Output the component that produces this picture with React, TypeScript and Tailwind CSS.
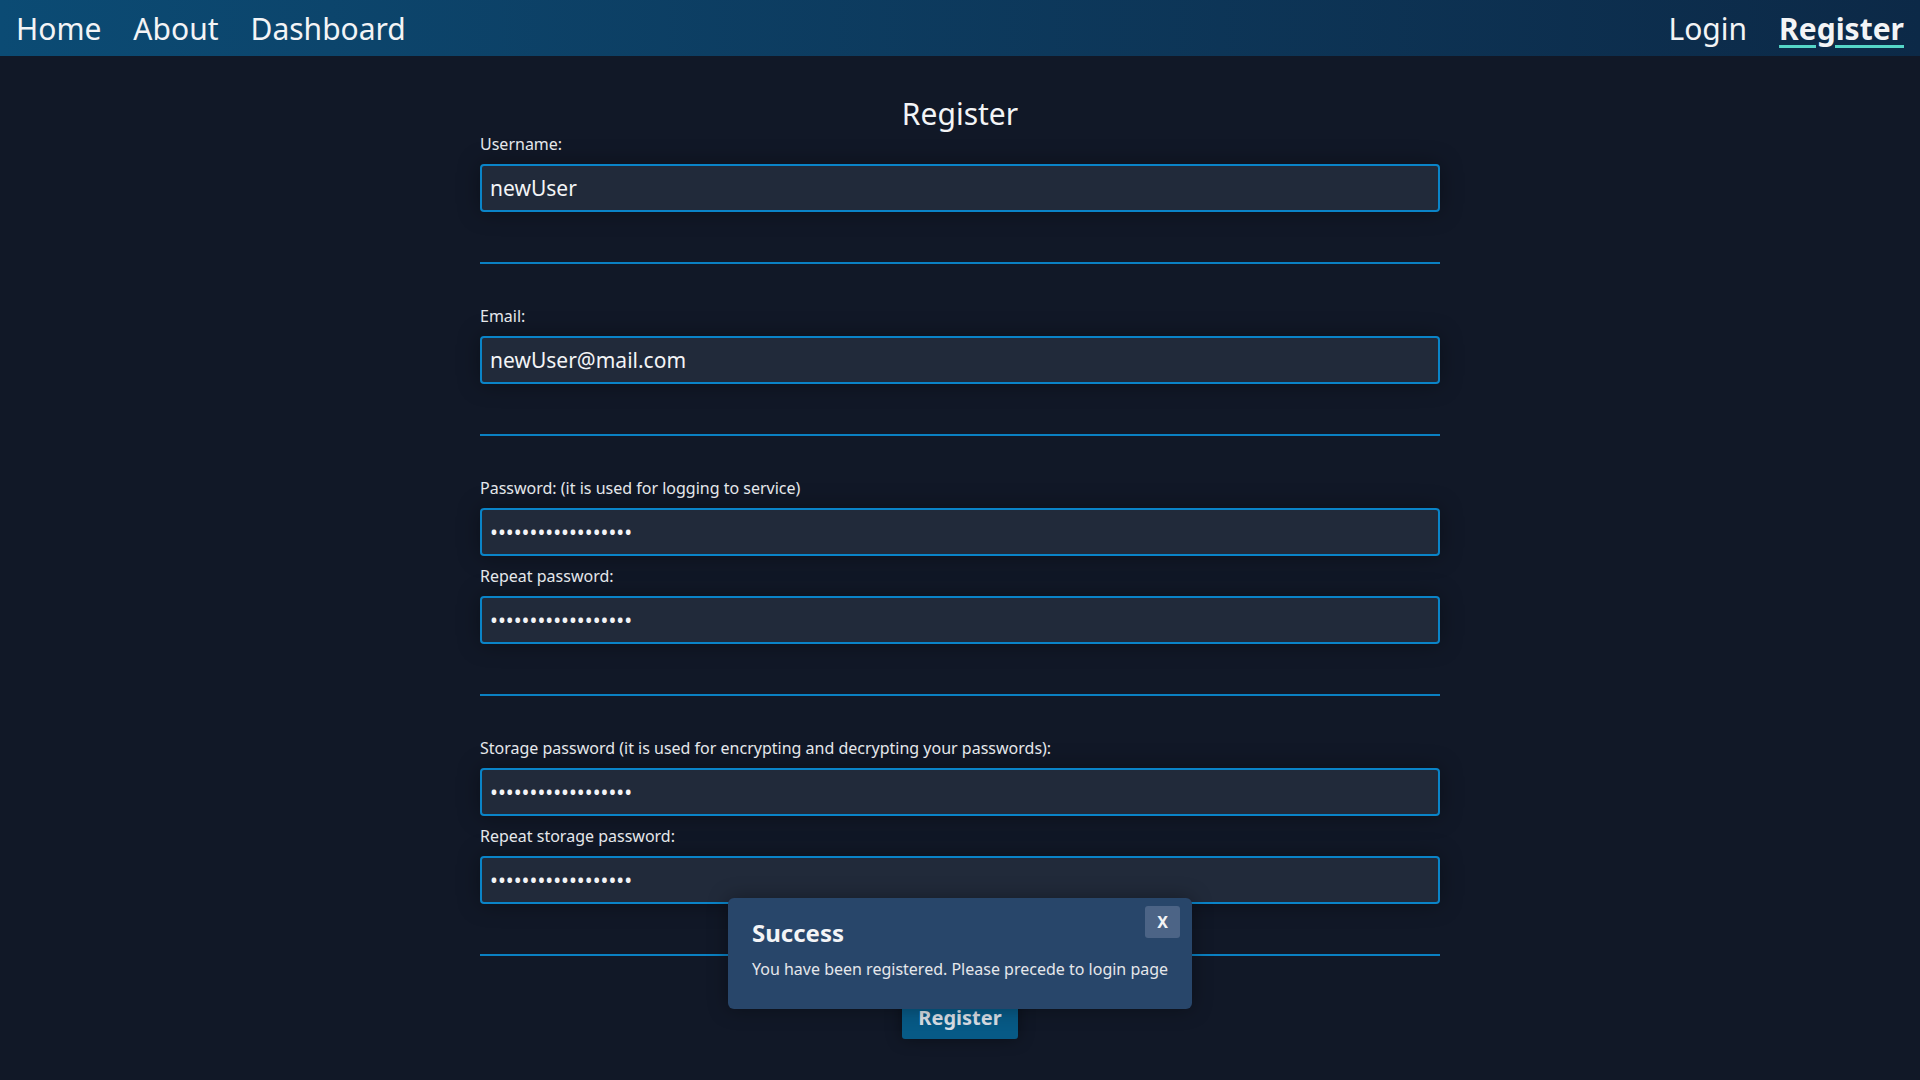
import { useState } from "react"

interface Field {
	id: string
	label: string
	type: string
	value: string
}

const groups: Field[][] = [
	[{ id: "username", label: "Username:", type: "text", value: "newUser" }],
	[{ id: "email", label: "Email:", type: "email", value: "newUser@mail.com" }],
	[
		{ id: "password", label: "Password: (it is used for logging to service)", type: "password", value: "secretPassword1234" },
		{ id: "password2", label: "Repeat password:", type: "password", value: "secretPassword1234" },
	],
	[
		{ id: "storage", label: "Storage password (it is used for encrypting and decrypting your passwords):", type: "password", value: "storagePassword123" },
		{ id: "storage2", label: "Repeat storage password:", type: "password", value: "storagePassword123" },
	],
]

function Navbar() {
	return (
		<nav className="h-[56px] flex items-center justify-between bg-linear-to-r from-[#0b4b74] to-[#0c2947] px-4 text-[30px] text-[#f3f4f6]">
			<div className="flex items-center gap-[32px]">
				<a href="#">Home</a>
				<a href="#">About</a>
				<a href="#">Dashboard</a>
			</div>
			<div className="flex items-center gap-[32px]">
				<a href="#">Login</a>
				<a
					href="#"
					className="font-bold underline decoration-[#55d6c8] decoration-[3px] underline-offset-[5px]"
				>
					Register
				</a>
			</div>
		</nav>
	)
}

export default function App() {
	const [showPopup, setShowPopup] = useState(true)

	return (
		<div className="relative min-h-screen bg-[#111827] font-['Noto_Sans',sans-serif] text-[#e5e7eb]">
			<Navbar />

			<main className="w-[960px] mx-auto">
				<h1 className="mt-[43px] mb-[3px] text-center text-[30px] leading-[30px] text-[#f3f4f6]">
					Register
				</h1>

				<form onSubmit={e => e.preventDefault()}>
					{groups.map((group, gi) => (
						<div key={gi}>
							<div className={gi === 0 ? "pb-[42px]" : "pt-[40px] pb-[42px]"}>
								{group.map(field => (
									<div key={field.id} className="mb-[8px]">
										<label htmlFor={field.id} className="block text-[16px] leading-6 text-[#e5e7eb]">
											{field.label}
										</label>
										<input
											id={field.id}
											type={field.type}
											defaultValue={field.value}
											className="mt-[8px] block w-full h-[48px] px-[8px] rounded-[4px] border-2 border-[#0a84c8] bg-[#212a3a] text-[21px] text-[#f3f4f6] outline-none shadow-[0_0_22px_rgba(0,0,0,0.35)]"
										/>
									</div>
								))}
							</div>
							<hr className="border-0 border-t-2 border-[#0a80c2]" />
						</div>
					))}

					<div className="pt-[40px] flex justify-center">
						<button
							type="submit"
							className="h-[43px] px-[16px] rounded-[3px] bg-[#075a86] text-[20px] font-bold text-[#d8dee5] shadow-[0_0_16px_rgba(0,0,0,0.4)]"
						>
							Register
						</button>
					</div>
				</form>
			</main>

			{showPopup && (
				<div className="absolute left-1/2 -translate-x-1/2 top-[898px] w-[464px] h-[111px] rounded-[6px] bg-[#28466a] px-6 pt-[20px] shadow-[0_0_20px_rgba(0,0,0,0.35)]">
					<button
						onClick={() => setShowPopup(false)}
						className="absolute top-[8px] right-[12px] w-[35px] h-[32px] rounded-[3px] bg-[#4c6486] text-[16px] font-bold text-[#f3f4f6]"
					>
						X
					</button>
					<h2 className="text-[24px] leading-[29px] font-bold text-[#f3f4f6]">Success</h2>
					<p className="mt-[10px] whitespace-nowrap text-[16px] leading-6 text-[#e5e7eb]">
						You have been registered. Please precede to login page
					</p>
				</div>
			)}
		</div>
	)
}
